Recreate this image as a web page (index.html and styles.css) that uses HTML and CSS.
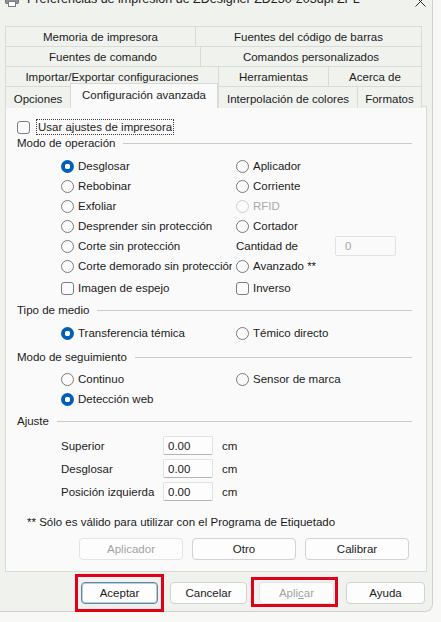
FILE: index.html
```html
<!DOCTYPE html>
<html lang="es">
<head>
<meta charset="utf-8">
<title>Preferencias de impresión</title>
<link rel="stylesheet" href="styles.css">
</head>
<body>
<div class="window">
  <div class="titlebar">
    <svg class="app-icon" viewBox="0 0 14 14" aria-hidden="true">
      <rect x="3.5" y="0.5" width="7" height="4" fill="#ffffff" stroke="#7a7f86"/>
      <rect x="0.5" y="4.5" width="13" height="6" rx="1" fill="#8d939b" stroke="#6b7078"/>
      <rect x="3.5" y="8.5" width="7" height="5" fill="#ffffff" stroke="#7a7f86"/>
      <rect x="10" y="6" width="2" height="1" fill="#3b8ee0"/>
    </svg>
    <span class="title">Preferencias de impresión de ZDesigner ZD230-203dpi ZPL</span>
    <svg class="close" viewBox="0 0 11 11" aria-hidden="true">
      <path d="M0.5 0.5L10.5 10.5M10.5 0.5L0.5 10.5" stroke="#2b2b2b" stroke-width="1" fill="none"/>
    </svg>
  </div>

  <div class="tabs">
    <div class="tab-row row1">
      <div class="tab">Memoria de impresora</div>
      <div class="tab">Fuentes del código de barras</div>
    </div>
    <div class="tab-row row2">
      <div class="tab">Fuentes de comando</div>
      <div class="tab">Comandos personalizados</div>
    </div>
    <div class="tab-row row3">
      <div class="tab">Importar/Exportar configuraciones</div>
      <div class="tab">Herramientas</div>
      <div class="tab">Acerca de</div>
    </div>
    <div class="tab-row row4">
      <div class="tab">Opciones</div>
      <div class="tab active">Configuración avanzada</div>
      <div class="tab">Interpolación de colores</div>
      <div class="tab">Formatos</div>
    </div>
  </div>

  <div class="panel">
    <div class="use-row">
      <span class="checkbox"></span>
      <span class="focus-label">Usar ajustes de impresora</span>
    </div>

    <div class="section s-op"><span class="section-title">Modo de operación</span><span class="rule"></span></div>
    <div class="options op-grid">
      <div class="opt"><span class="radio on"></span><span>Desglosar</span></div>
      <div class="opt"><span class="radio"></span><span>Aplicador</span></div>
      <div class="opt"><span class="radio"></span><span>Rebobinar</span></div>
      <div class="opt"><span class="radio"></span><span>Corriente</span></div>
      <div class="opt"><span class="radio"></span><span>Exfoliar</span></div>
      <div class="opt disabled"><span class="radio"></span><span>RFID</span></div>
      <div class="opt"><span class="radio"></span><span>Desprender sin protección</span></div>
      <div class="opt"><span class="radio"></span><span>Cortador</span></div>
      <div class="opt"><span class="radio"></span><span>Corte sin protección</span></div>
      <div class="opt qty"><span class="qty-label">Cantidad de</span><span class="qty-field">0</span></div>
      <div class="opt clip"><span class="radio"></span><span>Corte demorado sin protección</span></div>
      <div class="opt"><span class="radio"></span><span>Avanzado **</span></div>
    </div>
    <div class="options checks">
      <div class="opt"><span class="checkbox"></span><span>Imagen de espejo</span></div>
      <div class="opt"><span class="checkbox"></span><span>Inverso</span></div>
    </div>

    <div class="section s-media"><span class="section-title">Tipo de medio</span><span class="rule"></span></div>
    <div class="options media">
      <div class="opt"><span class="radio on"></span><span>Transferencia témica</span></div>
      <div class="opt"><span class="radio"></span><span>Témico directo</span></div>
    </div>

    <div class="section s-track"><span class="section-title">Modo de seguimiento</span><span class="rule"></span></div>
    <div class="options track">
      <div class="opt"><span class="radio"></span><span>Continuo</span></div>
      <div class="opt"><span class="radio"></span><span>Sensor de marca</span></div>
      <div class="opt"><span class="radio on"></span><span>Detección web</span></div>
    </div>

    <div class="section s-adjust"><span class="section-title">Ajuste</span><span class="rule"></span></div>
    <div class="fields">
      <span class="f-label">Superior</span><span class="f-input">0.00</span><span class="f-unit">cm</span>
      <span class="f-label">Desglosar</span><span class="f-input">0.00</span><span class="f-unit">cm</span>
      <span class="f-label">Posición izquierda</span><span class="f-input">0.00</span><span class="f-unit">cm</span>
    </div>

    <div class="footnote">** Sólo es válido para utilizar con el Programa de Etiquetado</div>

    <div class="panel-buttons">
      <span class="btn wide disabled">Aplicador</span>
      <span class="btn wide">Otro</span>
      <span class="btn wide">Calibrar</span>
    </div>
  </div>

  <div class="dialog-buttons">
    <span class="btn-wrap w-accept"><span class="btn default">Aceptar</span><span class="hl hl-accept"></span></span>
    <span class="btn-wrap w-cancel"><span class="btn">Cancelar</span></span>
    <span class="btn-wrap w-apply"><span class="btn disabled">Apli<u>c</u>ar</span><span class="hl hl-apply"></span></span>
    <span class="btn-wrap w-help"><span class="btn">Ayuda</span></span>
  </div>
</div>
</body>
</html>
```

FILE: styles.css
```css
* {
  box-sizing: border-box;
}

html,
body {
  margin: 0;
  padding: 0;
}

body {
  width: 441px;
  height: 622px;
  overflow: hidden;
  background: #f8f8f7;
  font-family: "Liberation Sans", Arial, sans-serif;
  font-size: 11.5px;
  color: #1b1b1b;
}

.window {
  width: 433px;
  height: 612px;
  background: #f0f2ee;
  border-right: 1px solid #cfd2cc;
  border-bottom: 1px solid #cfd2cc;
  border-bottom-right-radius: 8px;
}

/* Title bar (clipped at the top of the shot) */
.titlebar {
  height: 26px;
  display: flex;
  align-items: flex-start;
  padding-left: 5px;
}

.app-icon {
  flex: none;
  width: 14px;
  height: 14px;
  margin-top: -7px;
}

.title {
  margin-left: 8px;
  margin-top: -10px;
  font-size: 12.5px;
  line-height: 18px;
  white-space: nowrap;
  color: #202020;
}

.close {
  flex: none;
  margin-left: auto;
  margin-right: 6px;
  margin-top: -4px;
  width: 11px;
  height: 11px;
}

/* Tabs */
.tabs {
  margin-left: 5px;
  width: 417px;
}

.tab-row {
  display: grid;
  height: 20px;
}

.row1 { grid-template-columns: 190px 1fr; }
.row2 { grid-template-columns: 195px 1fr; }
.row3 { grid-template-columns: 213px 110px 1fr; }
.row4 { grid-template-columns: 65px 148px 139px 1fr; }

.tab {
  display: flex;
  align-items: center;
  justify-content: center;
  white-space: nowrap;
  background: #f0f2ee;
  border-top: 1px solid #d9dbd6;
  border-left: 1px solid #d9dbd6;
}

.tab:last-child {
  border-right: 1px solid #d9dbd6;
}

.row4 .tab {
  padding-top: 2px;
}

.tab.active {
  position: relative;
  z-index: 1;
  height: 25px;
  margin-top: -3px;
  padding-top: 0;
  padding-bottom: 2px;
  background: #fafafa;
  border-right: 1px solid #d9dbd6;
}

/* Panel */
.panel {
  margin-left: 5px;
  width: 422px;
  height: 466px;
  background: #fafafa;
  border: 1px solid #d9dbd6;
  padding: 12px 14px 0 11px;
}

.use-row {
  display: flex;
  align-items: center;
  height: 16px;
}

.checkbox {
  flex: none;
  width: 13px;
  height: 13px;
  border: 1px solid #7d7d7d;
  border-radius: 3px;
  background: #fbfbfb;
}

.focus-label {
  margin-left: 6px;
  height: 16px;
  line-height: 14px;
  padding: 0 1px;
  border: 1px dotted #3a3a3a;
}

.section {
  display: flex;
  align-items: center;
  height: 16px;
}

.rule {
  flex: 1;
  margin-left: 8px;
  height: 1px;
  background: #c9cbc7;
}

.s-media { margin-top: 4px; }
.s-track { margin-top: 6px; }
.s-adjust { margin-top: 4px; }

.options {
  display: grid;
  grid-template-columns: 175px 1fr;
  grid-auto-rows: 20px;
  margin-left: 44px;
}

.op-grid { margin-top: 5px; }
.checks { margin-top: 2px; }
.media { margin-top: 5px; }
.track { margin-top: 4px; }

.opt {
  display: flex;
  align-items: center;
  gap: 4px;
  white-space: nowrap;
}

.opt.clip {
  width: 171px;
  overflow: hidden;
}

.opt.disabled {
  color: #a9a9a9;
}

.radio {
  flex: none;
  width: 13px;
  height: 13px;
  border: 1px solid #7a7a7a;
  border-radius: 50%;
  background: #fbfbfb;
}

.opt.disabled .radio {
  border-color: #cfcfcf;
}

.radio.on {
  border: none;
  background: radial-gradient(circle, #ffffff 0 2.6px, #005fb8 3px);
}

.qty {
  gap: 0;
}

.qty-label {
  width: 99px;
}

.qty-field {
  width: 61px;
  height: 20px;
  line-height: 18px;
  padding-left: 9px;
  color: #a6a6a6;
  background: #fafafa;
  border: 1px solid #e2e2e2;
  border-radius: 2px;
}

/* Ajuste fields */
.fields {
  display: grid;
  grid-template-columns: 102px 50px auto;
  grid-auto-rows: 23px;
  align-items: center;
  margin-top: 5px;
  margin-left: 44px;
  width: 200px;
}

.f-label {
  white-space: nowrap;
}

.f-unit {
  margin-left: 9px;
}

.f-input {
  height: 19px;
  line-height: 18px;
  padding-left: 4px;
  background: #fdfdfd;
  border: 1px solid #e1e1e1;
  border-bottom-color: #b4b4b4;
  border-radius: 2px;
}

.footnote {
  margin-top: 11px;
  margin-left: 10px;
  height: 16px;
  line-height: 16px;
  white-space: nowrap;
}

/* Buttons */
.panel-buttons {
  display: flex;
  gap: 9px;
  margin-top: 8px;
  margin-left: 62px;
}

.btn {
  display: flex;
  align-items: center;
  justify-content: center;
  height: 22px;
  background: #fdfdfd;
  border: 1px solid #d2d2d2;
  border-radius: 4px;
  white-space: nowrap;
}

.btn.wide {
  width: 104px;
}

.btn.disabled {
  color: #a3a3a3;
  border-color: #e4e4e4;
}

.btn.default {
  border: 1px solid #5f88a6;
  box-shadow: inset 0 0 0 1px #b6cddd;
}

.dialog-buttons {
  display: flex;
  gap: 12px;
  margin-top: 10px;
  padding-left: 81px;
}

.btn-wrap {
  position: relative;
  display: block;
}

.w-accept .btn,
.w-cancel .btn { width: 77px; }
.w-apply .btn { width: 75px; }
.w-help .btn { width: 79px; }

.hl {
  position: absolute;
  border: 3px solid #e1001a;
}

.hl-accept {
  top: -8px;
  bottom: -8px;
  left: -6px;
  right: -6px;
}

.hl-apply {
  top: -5px;
  bottom: -3px;
  left: -8px;
  right: -4px;
}
```
